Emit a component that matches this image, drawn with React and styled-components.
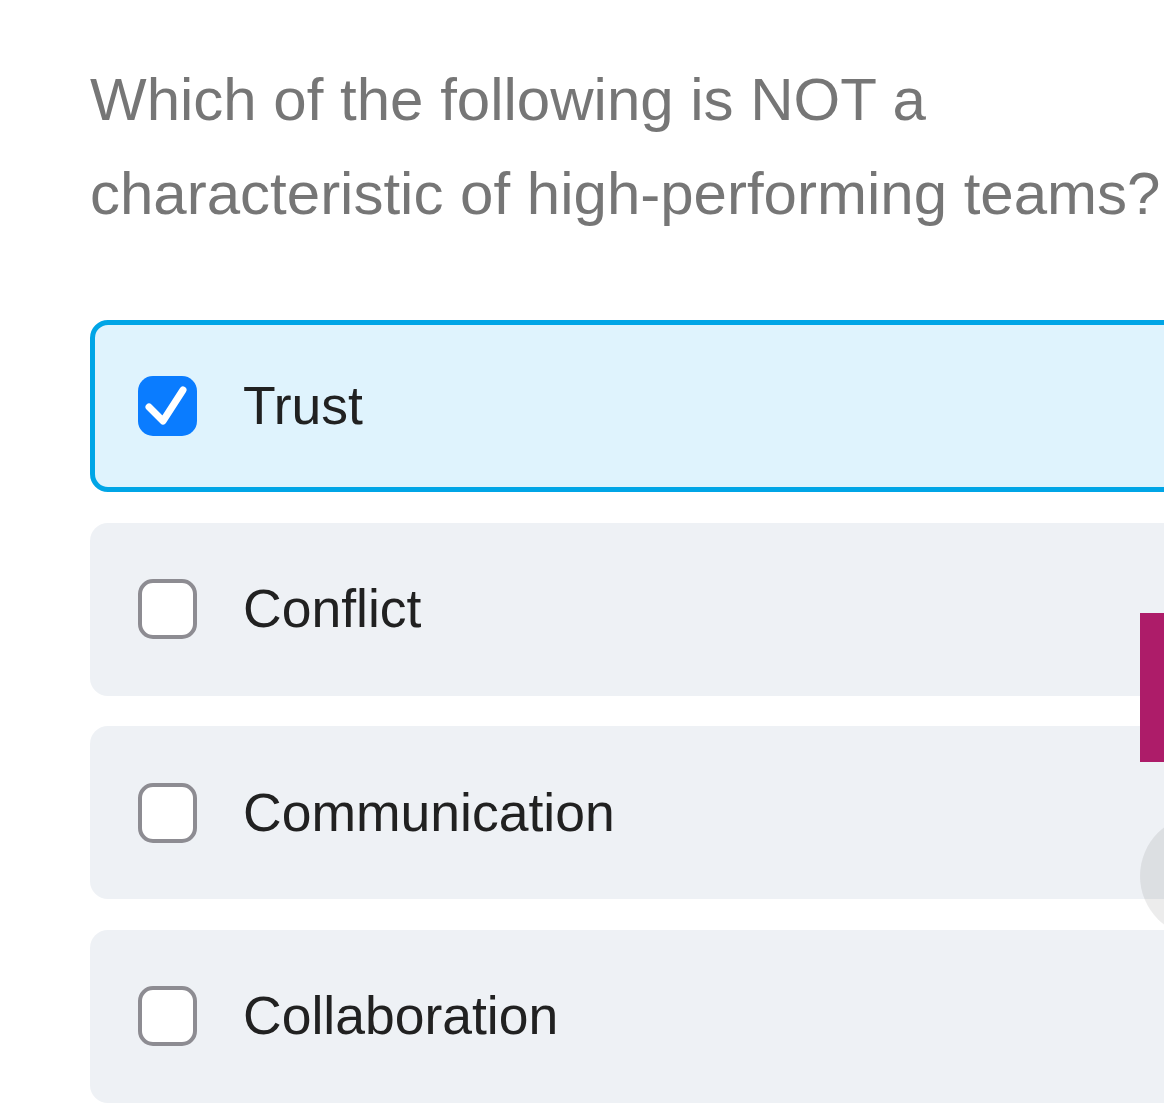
import React from "react";
import styled, { createGlobalStyle } from "styled-components";

const Global = createGlobalStyle`
  html, body { margin: 0; padding: 0; background: #ffffff; overflow: hidden; }
  body { font-family: "Liberation Sans", Arial, Helvetica, sans-serif; }
`;

const Page = styled.div`
  position: relative;
  width: 1164px;
  height: 1109px;
  overflow: hidden;
`;

const Content = styled.div`
  width: 1130px;
  padding: 53px 0 0 90px;
`;

const Question = styled.h1`
  margin: 0 0 79px 0;
  font-size: 60px;
  line-height: 94px;
  font-weight: 400;
  color: #767676;
  letter-spacing: 0;
`;

const Options = styled.div`
  display: flex;
  flex-direction: column;
  gap: 30.5px;
`;

const Option = styled.div`
  box-sizing: border-box;
  height: ${(p) => (p.$selected ? "172px" : "173px")};
  display: flex;
  align-items: center;
  gap: 46px;
  padding-left: ${(p) => (p.$selected ? "43px" : "48px")};
  border-radius: 18px;
  background: ${(p) => (p.$selected ? "#dff3fd" : "#eef1f5")};
  border: ${(p) => (p.$selected ? "5px solid #00a5e6" : "none")};
`;

const Box = styled.div`
  box-sizing: border-box;
  position: relative;
  width: 59px;
  height: 60px;
  border-radius: 15px;
  flex: none;
  background: ${(p) => (p.$checked ? "#0a7cff" : "#ffffff")};
  border: ${(p) => (p.$checked ? "none" : "4.5px solid #8d8c92")};
  svg { display: block; }
`;

const Label = styled.span`
  font-size: 53.5px;
  color: #212121;
  line-height: 1;
`;

const SideBar = styled.div`
  position: absolute;
  left: 1140px;
  top: 613px;
  width: 40px;
  height: 149px;
  background: #ad1c69;
`;

const Knob = styled.div`
  position: absolute;
  left: 1140px;
  top: 815px;
  width: 122px;
  height: 122px;
  border-radius: 50%;
  background: rgba(0, 0, 0, 0.075);
`;

const Check = () => (
  <svg width="59" height="60" viewBox="0 0 59 60">
    <path
      d="M11 31 L25 45 L45 14"
      fill="none"
      stroke="#ffffff"
      strokeWidth="7"
      strokeLinecap="round"
      strokeLinejoin="round"
    />
  </svg>
);

const options = [
  { label: "Trust", selected: true },
  { label: "Conflict" },
  { label: "Communication" },
  { label: "Collaboration" },
];

export default function App() {
  return (
    <Page>
      <Global />
      <Content>
        <Question>
          Which of the following is NOT a characteristic of high-performing teams?
        </Question>
        <Options>
          {options.map((o) => (
            <Option key={o.label} $selected={o.selected}>
              <Box $checked={o.selected}>{o.selected && <Check />}</Box>
              <Label>{o.label}</Label>
            </Option>
          ))}
        </Options>
      </Content>
      <SideBar />
      <Knob />
    </Page>
  );
}
